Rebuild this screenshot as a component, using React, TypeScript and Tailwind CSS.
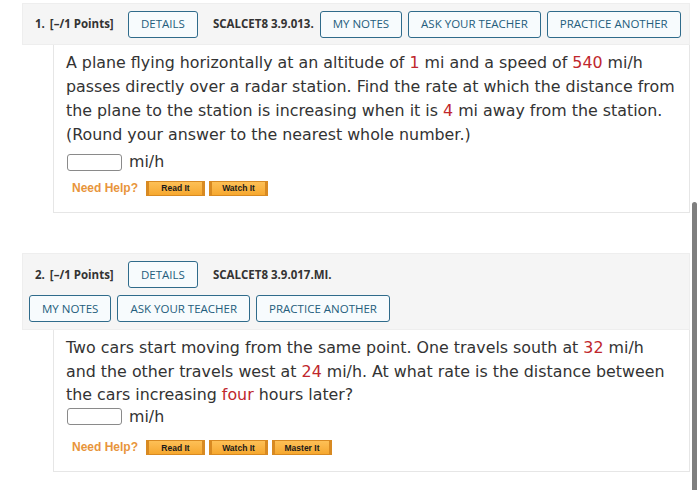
import React from 'react';

const Btn = ({ children }: { children: React.ReactNode }) => (
    <span className="inline-flex items-center h-[27px] px-[12px] border border-[#2f6b8b] rounded-[3px] bg-[#f7fbfd] text-[11.5px] text-[#245d7c] font-['Open_Sans',sans-serif] whitespace-nowrap">
        {children}
    </span>
);

const HelpBtn = ({ children, w }: { children: React.ReactNode; w: string }) => (
    <span className={`${w} inline-flex items-center justify-center h-[15px] border border-[#d88a22] border-l-[3px] border-r-[3px] bg-gradient-to-b from-[#fdc056] to-[#f6a82e] text-[8.5px] leading-none font-bold text-[#1a1a1a] font-['Liberation_Sans',sans-serif]`}>
        {children}
    </span>
);

const Red = ({ children }: { children: React.ReactNode }) => <span className="text-[#c0272d]">{children}</span>;

const Answer = ({ className }: { className: string }) => (
    <div className={`flex items-center h-[24px] ${className}`}>
        <span className="w-[55px] h-[17px] border border-[#8a8a8a] rounded-[3px] bg-white ml-[1px]" />
        <span className="ml-[7px]">mi/h</span>
    </div>
);

const NeedHelp = ({ master, className }: { master?: boolean; className: string }) => (
    <div className={`flex items-center h-[24px] ml-[6px] ${className}`}>
        <span className="text-[12px] font-bold text-[#e8953c] font-['Liberation_Sans',sans-serif] mr-[8px]">Need Help?</span>
        <div className="flex gap-[4px]">
            <HelpBtn w="w-[59px]">Read It</HelpBtn>
            <HelpBtn w="w-[59px]">Watch It</HelpBtn>
            {master && <HelpBtn w="w-[60px]">Master It</HelpBtn>}
        </div>
    </div>
);

const Label = ({ n }: { n: number }) => (
    <div className="flex items-center text-[11.5px] font-bold text-[#333] font-['Open_Sans',sans-serif] w-[93px] shrink-0 whitespace-nowrap">
        <span>{n}.</span>
        <span className="ml-[5px]">[–/1 Points]</span>
    </div>
);

const Code = ({ children }: { children: React.ReactNode }) => (
    <span className="ml-[15px] text-[11.5px] font-bold text-[#333] font-['Open_Sans',sans-serif] whitespace-nowrap">{children}</span>
);

const App = () => {
    return (
        <div className="relative w-[700px] h-[490px] bg-white overflow-hidden">
            <div className="pl-[22px] pr-[10px] pt-[3px]">
                {/* question 1 */}
                <div className="h-[42px] bg-[#f5f5f5] border border-[#eeeeee] flex items-center pl-[12px]">
                    <Label n={1} />
                    <Btn>DETAILS</Btn>
                    <Code>SCALCET8 3.9.013.</Code>
                    <div className="flex gap-[6px] ml-[6px]">
                        <Btn>MY NOTES</Btn>
                        <Btn>ASK YOUR TEACHER</Btn>
                        <Btn>PRACTICE ANOTHER</Btn>
                    </div>
                </div>
                <div className="ml-[31px] h-[168px] border border-t-0 border-[#e6e6e6] pl-[12px] pr-[10px] pt-[6px] text-[15.85px] leading-[24px] text-[#333] font-['DejaVu_Sans',Verdana,sans-serif]">
                    <p>
                        A plane flying horizontally at an altitude of <Red>1</Red> mi and a speed of <Red>540</Red> mi/h passes directly over a radar station. Find the rate at which the distance from the plane to the station is increasing when it is <Red>4</Red> mi away from the station. (Round your answer to the nearest whole number.)
                    </p>
                    <Answer className="mt-[3px]" />
                    <NeedHelp className="mt-[2px]" />
                </div>

                {/* question 2 */}
                <div className="mt-[40px] h-[77px] bg-[#f5f5f5] border border-[#eeeeee] flex flex-col justify-center gap-[7px] pl-[6px]">
                    <div className="flex items-center pl-[6px]">
                        <Label n={2} />
                        <Btn>DETAILS</Btn>
                        <Code>SCALCET8 3.9.017.MI.</Code>
                    </div>
                    <div className="flex gap-[6px]">
                        <Btn>MY NOTES</Btn>
                        <Btn>ASK YOUR TEACHER</Btn>
                        <Btn>PRACTICE ANOTHER</Btn>
                    </div>
                </div>
                <div className="ml-[31px] h-[142px] border border-t-0 border-[#e6e6e6] pl-[12px] pr-[15px] pt-[6px] text-[15.85px] leading-[23.6px] text-[#333] font-['DejaVu_Sans',Verdana,sans-serif]">
                    <p>
                        Two cars start moving from the same point. One travels south at <Red>32</Red> mi/h and the other travels west at <Red>24</Red> mi/h. At what rate is the distance between the cars increasing <Red>four</Red> hours later?
                    </p>
                    <Answer className="-mt-[2px]" />
                    <NeedHelp master className="mt-[7px]" />
                </div>
            </div>

            {/* scrollbar */}
            <div className="absolute left-[692px] top-[202px] w-[5px] h-[300px] rounded-[3px] bg-[#7f7f7f]" />
        </div>
    );
};

export default App;
